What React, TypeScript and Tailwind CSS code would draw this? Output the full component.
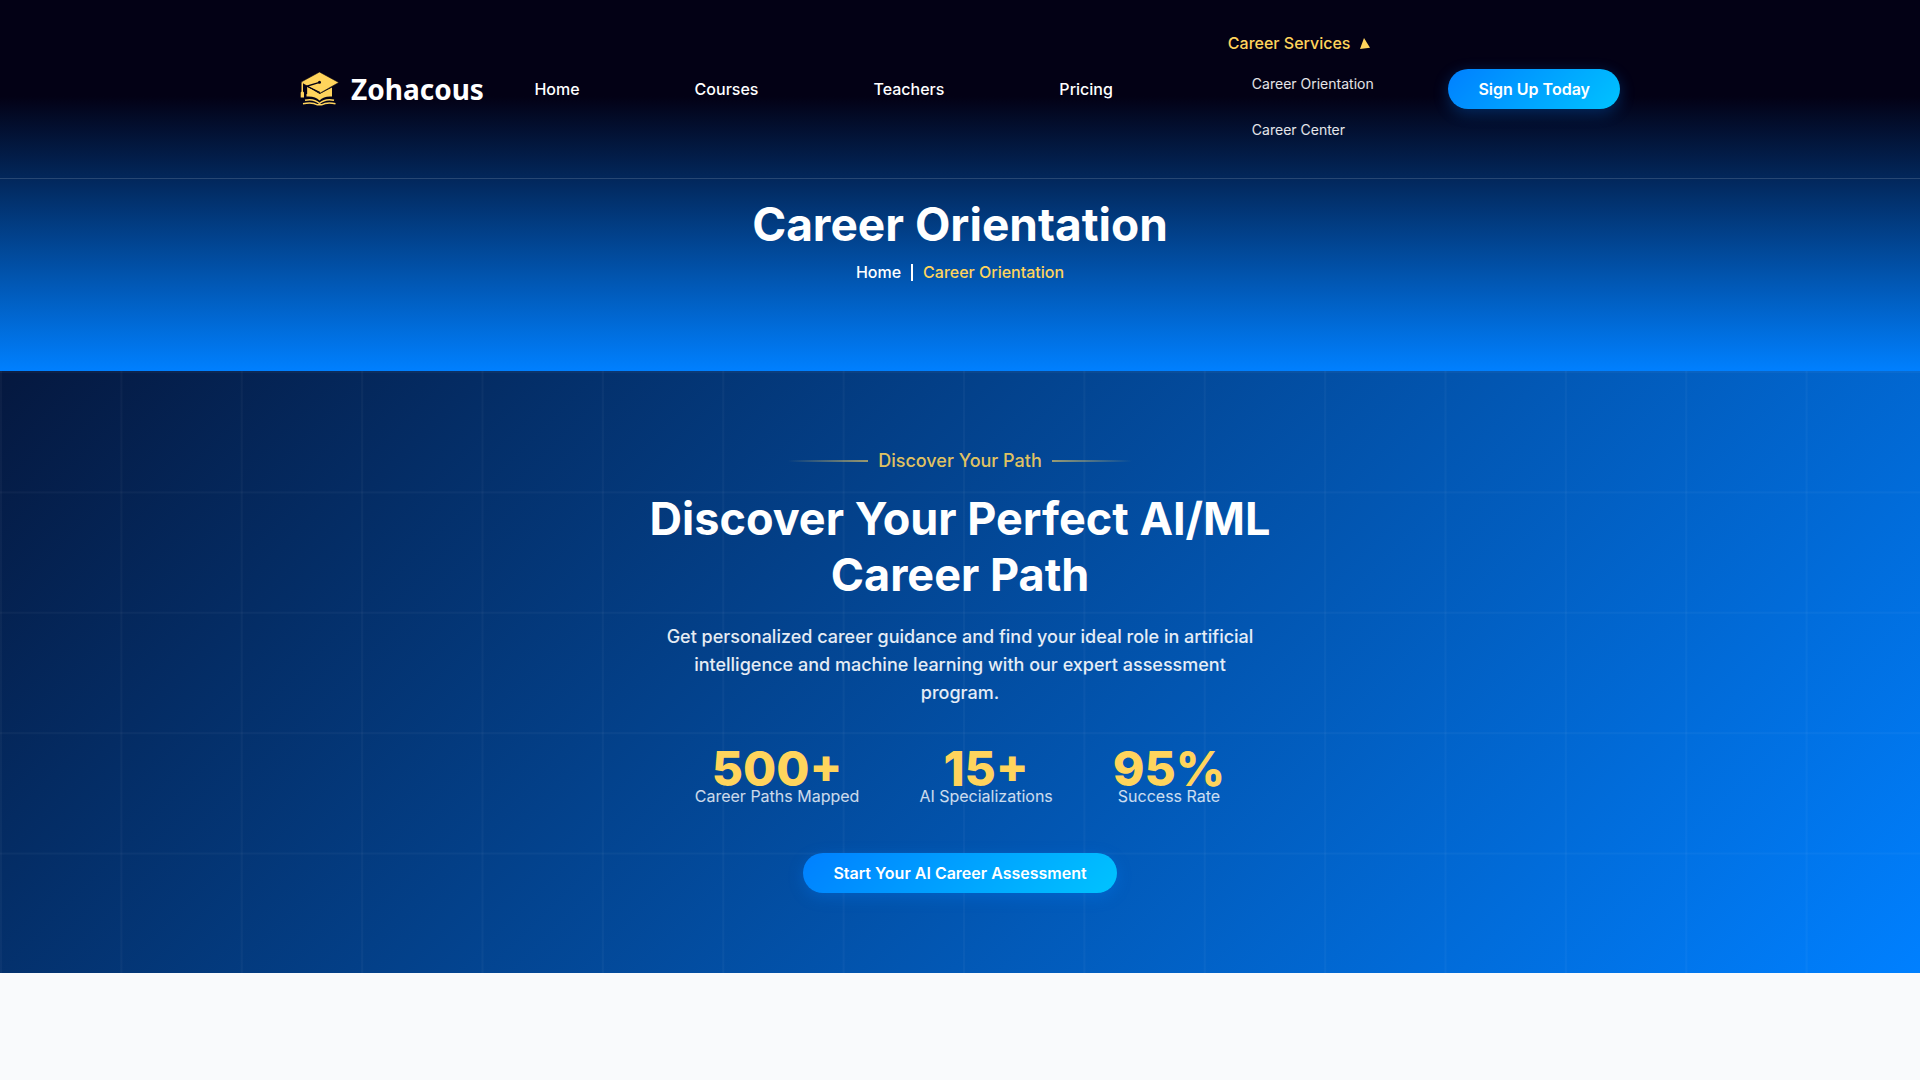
import React from "react";

const navLinks = ["Home", "Courses", "Teachers", "Pricing"];
const serviceLinks = ["Career Orientation", "Career Center"];
const stats = [
  { value: "500+", label: "Career Paths Mapped" },
  { value: "15+", label: "AI Specializations" },
  { value: "95%", label: "Success Rate" },
];

function LogoMark() {
  return (
    <svg viewBox="0 0 39 34" className="h-[34px] w-[39px] shrink-0" aria-hidden="true">
      <path fill="#ffd45c" d="M6.500 14 19.700 22 32 15.500V24.500C26.500 24 22.500 25.500 19.500 28.500 16.500 25.500 12.500 24 6.500 24.500Z" />
      <path fill="#ffd45c" stroke="#030014" strokeWidth=".6" d="M19.500 0 38.800 10.500 20 21.200.600 10.300Z" />
      <path fill="none" stroke="#030014" strokeWidth="1.300" d="M19.500 10.300 6.500 14.300V22M6.500 14 20 20.500" />
      <circle cx="19.500" cy="10.300" r="1.500" fill="#030014" />
      <path fill="#ffd45c" d="M1.500 11h1.500v8.500l1 1v5H.700v-5l.800-1Z" />
      <path fill="none" stroke="#ffd45c" strokeWidth="1.500" d="M5 28.300c6-1.300 11 0 14.500 3.200 3.500-3.200 8.500-4.500 14.500-3.200M3 31.800c6-1.200 11-.8 14.500 1h4c3.500-1.800 8.500-2.200 14-1" />
    </svg>
  );
}

export default function App() {
  return (
    <div className="min-h-screen bg-[#f9fafc] font-['Inter',sans-serif] text-base text-white">
      <div className="bg-linear-to-b/srgb from-[#030115] from-26% to-[#0080ff] pb-[87px]">
        <header className="border-b border-white/15">
          <div className="mx-auto flex max-w-[1320px] items-center justify-between py-[25px]">
            <a href="#" className="flex items-center gap-3 font-['Noto_Sans',sans-serif] text-[28px] leading-10 font-bold">
              <LogoMark />
              Zohacous
            </a>
            <nav className="flex items-center gap-[115px] font-medium">
              {navLinks.map((label) => (
                <a key={label} href="#">{label}</a>
              ))}
              <div className="w-[170px]">
                <button type="button" aria-expanded="true" className="flex h-9 items-center gap-2.5 text-[#ffd45c]">
                  Career Services
                  <svg viewBox="0 0 10 11" className="h-[11px] w-2.5" aria-hidden="true">
                    <path fill="#ffd45c" d="M4 0 10 9.700 0 11Z" />
                  </svg>
                </button>
                <ul className="pl-6 text-sm font-normal text-white/90">
                  {serviceLinks.map((label) => (
                    <li key={label} className="flex h-[46px] items-center">
                      <a href="#">{label}</a>
                    </li>
                  ))}
                </ul>
              </div>
            </nav>
            <button type="button" className="h-10 rounded-full bg-linear-135/srgb from-[#0080ff] to-[#00c3ff] px-[30px] font-semibold shadow-[0_4px_15px_rgba(0,128,255,0.3)]">
              Sign Up Today
            </button>
          </div>
        </header>
        <h1 className="mt-[17px] text-center text-[46px] leading-14 font-bold">Career Orientation</h1>
        <div className="mt-2 flex items-center justify-center gap-2.5 font-medium">
          <a href="#">Home</a>
          <span className="h-[17px] w-0.5 bg-white" />
          <span className="text-[#ffd45c]">Career Orientation</span>
        </div>
      </div>

      <section className="bg-linear-135/srgb from-[#05183f] to-[#0080ff]">
        <div className="bg-[linear-gradient(to_right,rgba(255,255,255,0.03)_2px,transparent_2px),linear-gradient(to_bottom,rgba(255,255,255,0.03)_2px,transparent_2px)] bg-size-[6.27%_20%]">
          <div className="mx-auto flex max-w-[640px] flex-col items-center py-20 text-center">
            <div className="flex items-center gap-2.5 text-lg leading-5 font-medium text-[#ffd45c]/90">
              <span className="h-0.5 w-20 bg-linear-to-l from-[#ffd45c]/60 to-transparent" />
              Discover Your Path
              <span className="h-0.5 w-20 bg-linear-to-r from-[#ffd45c]/60 to-transparent" />
            </div>
            <h2 className="mt-5 text-[45px] leading-14 font-bold">Discover Your Perfect AI/ML Career Path</h2>
            <p className="mt-5 max-w-[600px] text-lg leading-7 font-medium text-white/90">
              Get personalized career guidance and find your ideal role in artificial intelligence and machine learning with our expert assessment program.
            </p>
            <dl className="mt-[47px] flex gap-[60px]">
              {stats.map((s) => (
                <div key={s.label} className="flex flex-col-reverse">
                  <dt className="text-white/80">{s.label}</dt>
                  <dd className="text-[48px] leading-[30px] font-extrabold text-[#ffd45c]">{s.value}</dd>
                </div>
              ))}
            </dl>
            <button type="button" className="mt-[45px] h-10 rounded-full bg-linear-135/srgb from-[#0080ff] to-[#00c3ff] px-[30px] font-semibold shadow-[0_4px_15px_rgba(0,128,255,0.3)]">
              Start Your AI Career Assessment
            </button>
          </div>
        </div>
      </section>
    </div>
  );
}
